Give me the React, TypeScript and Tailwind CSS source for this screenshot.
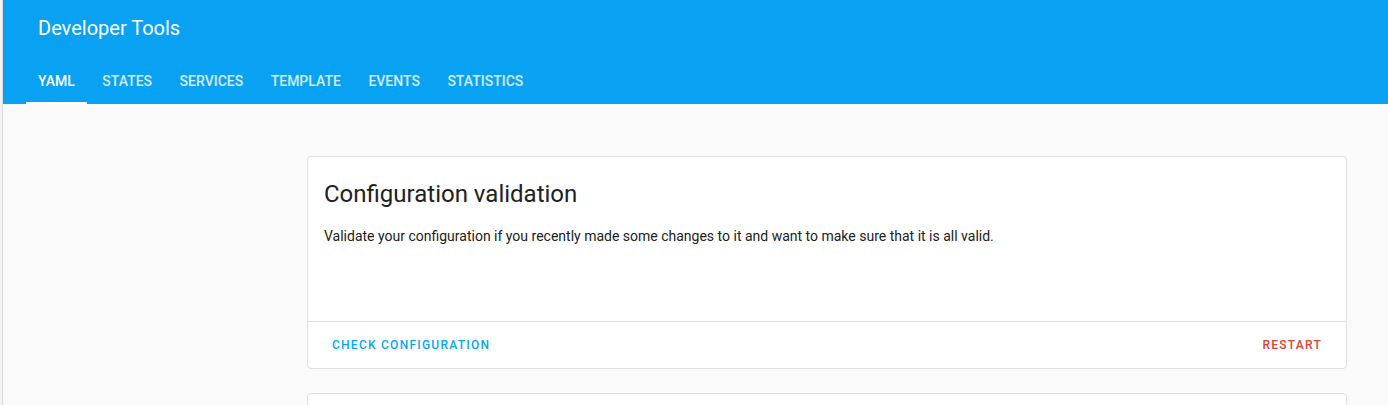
const tabs = ['YAML', 'STATES', 'SERVICES', 'TEMPLATE', 'EVENTS', 'STATISTICS'];

export default function App() {
  return (
    <div className="flex h-[405px] w-[1388px] overflow-hidden bg-[#fafafa] font-['Roboto',sans-serif]">
      <div className="w-[2px] shrink-0 bg-[#f3f3f3]" />
      <div className="w-px shrink-0 bg-[#dcdcdc]" />
      <div className="flex min-w-0 flex-1 flex-col">
        <header className="bg-[#09a1f2] text-white">
          <div className="flex h-[56px] items-center pl-[35px] text-[20px] font-normal">Developer Tools</div>
          <nav className="flex h-[48px] pl-[23px]">
            {tabs.map((t, i) => (
              <div
                key={t}
                className={`relative mr-[3.5px] flex items-center px-3 pt-[2px] text-[14px] font-medium ${i === 0 ? 'text-white' : 'text-white/80'}`}
              >
                {t}
                {i === 0 && <div className="absolute bottom-0 left-0 right-0 h-[2px] bg-white" />}
              </div>
            ))}
          </nav>
        </header>

        <main className="flex flex-col gap-6 pl-[304px] pt-[52px]">
          <section className="w-[1040px] rounded bg-white border border-[#e0e0e0]">
            <div className="h-[164px] px-4 pt-[21px]">
              <h1 className="text-[24px] leading-8 font-normal text-[#212121]">Configuration validation</h1>
              <p className="mt-4 text-[14px] leading-5 text-[#212121]">
                Validate your configuration if you recently made some changes to it and want to make sure that it is all valid.
              </p>
            </div>
            <div className="flex h-[47px] items-center justify-between border-t border-[#e0e0e0] px-4">
              <button className="px-2 text-[12px] font-medium tracking-[1.25px] text-[#03a9f4]">CHECK CONFIGURATION</button>
              <button className="px-2 text-[12px] font-medium tracking-[1.25px] text-[#db4437]">RESTART</button>
            </div>
          </section>
          <section className="h-[120px] w-[1040px] rounded bg-white border border-[#e0e0e0]" />
        </main>
      </div>
    </div>
  );
}
